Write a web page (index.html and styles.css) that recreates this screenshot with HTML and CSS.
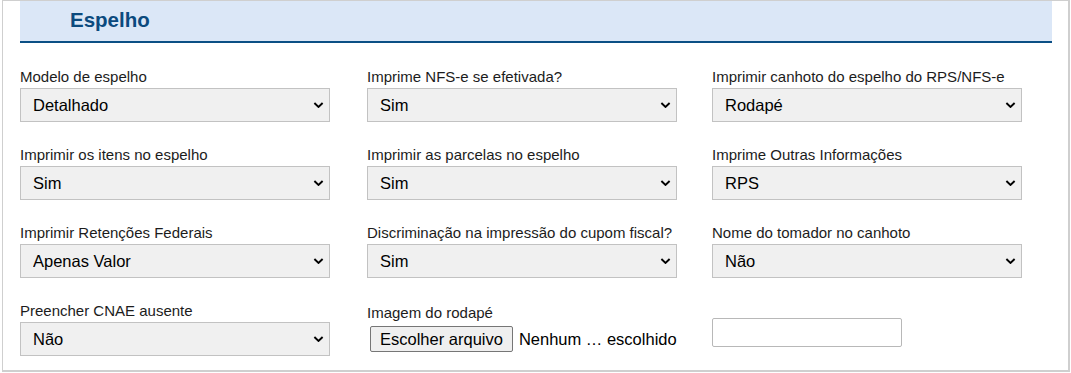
FILE: index.html
```html
<!DOCTYPE html>
<html lang="pt-BR">

<head>
    <meta charset="UTF-8">
    <title>Espelho</title>
    <link rel="stylesheet" href="styles.css">
</head>

<body>
    <div class="painel">
        <h2 class="titulo">Espelho</h2>

        <div class="campos">
            <div class="campo">
                <label>Modelo de espelho</label>
                <select>
                    <option>Detalhado</option>
                    <option>Simplificado</option>
                </select>
            </div>
            <div class="campo">
                <label>Imprime NFS-e se efetivada?</label>
                <select>
                    <option>Sim</option>
                    <option>Não</option>
                </select>
            </div>
            <div class="campo">
                <label>Imprimir canhoto do espelho do RPS/NFS-e</label>
                <select>
                    <option>Rodapé</option>
                    <option>Cabeçalho</option>
                    <option>Não</option>
                </select>
            </div>

            <div class="campo">
                <label>Imprimir os itens no espelho</label>
                <select>
                    <option>Sim</option>
                    <option>Não</option>
                </select>
            </div>
            <div class="campo">
                <label>Imprimir as parcelas no espelho</label>
                <select>
                    <option>Sim</option>
                    <option>Não</option>
                </select>
            </div>
            <div class="campo">
                <label>Imprime Outras Informações</label>
                <select>
                    <option>RPS</option>
                    <option>NFS-e</option>
                </select>
            </div>

            <div class="campo">
                <label>Imprimir Retenções Federais</label>
                <select>
                    <option>Apenas Valor</option>
                    <option>Detalhado</option>
                </select>
            </div>
            <div class="campo">
                <label>Discriminação na impressão do cupom fiscal?</label>
                <select>
                    <option>Sim</option>
                    <option>Não</option>
                </select>
            </div>
            <div class="campo">
                <label>Nome do tomador no canhoto</label>
                <select>
                    <option>Não</option>
                    <option>Sim</option>
                </select>
            </div>

            <div class="campo">
                <label>Preencher CNAE ausente</label>
                <select>
                    <option>Não</option>
                    <option>Sim</option>
                </select>
            </div>
            <div class="campo campo-arquivo">
                <label>Imagem do rodapé</label>
                <div class="arquivo">
                    <button type="button" class="btn-arquivo">Escolher arquivo</button>
                    <span class="nome-arquivo">Nenhum … escolhido</span>
                </div>
            </div>
            <div class="campo campo-texto">
                <input type="text" class="texto">
            </div>
        </div>
    </div>
</body>

</html>
```

FILE: styles.css
```css
* {
    margin: 0;
    padding: 0;
    box-sizing: border-box;
}

body {
    background: #fff;
    font-family: "Liberation Sans", Arial, sans-serif;
    color: #1c1c1c;
}

.painel {
    width: 1068px;
    height: 372px;
    margin: 0 0 0 2px;
    border: 1px solid #cfcfcf;
    border-width: 1px 2px 2px 1px;
    padding: 0 16px 0 17px;
}

/* faixa do titulo */
.titulo {
    height: 42px;
    padding: 7px 0 0 50px;
    background: #dbe7f7;
    border-bottom: 2px solid #0b4f85;
    color: #0b4a7e;
    font-size: 20.5px;
    line-height: 24px;
    font-weight: bold;
}

.campos {
    display: grid;
    grid-template-columns: 347px 345px 340px;
    row-gap: 24px;
    margin-top: 25px;
}

.campo label {
    display: block;
    font-size: 15px;
    line-height: 17px;
    margin-bottom: 3px;
}

.campo select {
    display: block;
    width: 310px;
    height: 34px;
    padding: 0 24px 0 12px;
    font-family: "Liberation Sans", Arial, sans-serif;
    font-size: 16.5px;
    color: #000;
    background: #f0f0f0 url("data:image/svg+xml,%3Csvg xmlns='http://www.w3.org/2000/svg' viewBox='0 0 12 7'%3E%3Cpath d='M1.2 1.2L6 5.8L10.8 1.2' fill='none' stroke='%23000' stroke-width='2.2'/%3E%3C/svg%3E") no-repeat right 5px center / 11px 6px;
    border: 1px solid #c2c2c2;
    border-radius: 0;
    appearance: none;
    -webkit-appearance: none;
}

.campo-arquivo {
    margin-top: 2px;
}

.arquivo {
    display: flex;
    align-items: center;
    gap: 6px;
    margin: 5px 0 0 3px;
}

.btn-arquivo {
    height: 26px;
    padding: 0 9px;
    font-family: "Liberation Sans", Arial, sans-serif;
    font-size: 16.5px;
    color: #000;
    background: #efefef;
    border: 1px solid #767676;
    border-radius: 2px;
}

.nome-arquivo {
    font-size: 16.5px;
    color: #000;
}

.campo-texto {
    padding-top: 16px;
}

.texto {
    width: 190px;
    height: 29px;
    border: 1px solid #b8b8b8;
    border-radius: 2px;
    background: #fff;
}
```
